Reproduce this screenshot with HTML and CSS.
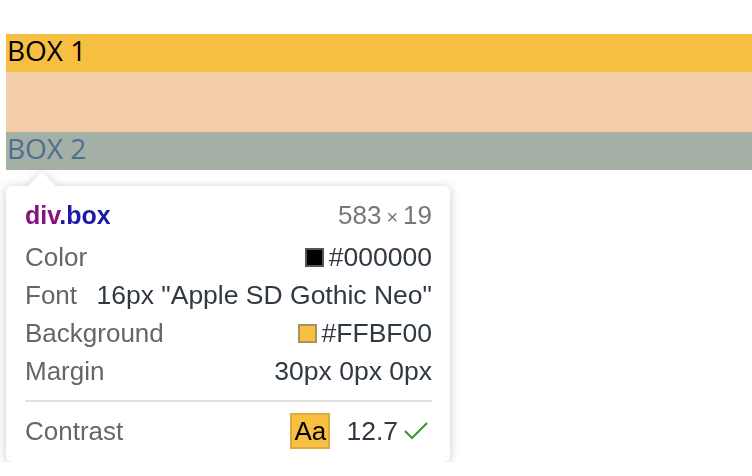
FILE: index.html
```html
<!DOCTYPE html>
<html>
<head>
<meta charset="utf-8">
<link rel="stylesheet" href="styles.css">
</head>
<body>
<div class="page">
  <div class="box box1">BOX 1</div>
  <div class="margin-area"></div>
  <div class="box box2">BOX 2</div>
  <div class="tooltip">
    <div class="tip-head">
      <span class="sel"><span class="tag">div</span><span class="cls">.box</span></span>
      <span class="size">583<span class="times">×</span>19</span>
    </div>
    <div class="row"><span class="label">Color</span><span class="value"><span class="swatch swatch-black"></span>#000000</span></div>
    <div class="row"><span class="label">Font</span><span class="value">16px "Apple SD Gothic Neo"</span></div>
    <div class="row"><span class="label">Background</span><span class="value"><span class="swatch swatch-orange"></span>#FFBF00</span></div>
    <div class="row"><span class="label">Margin</span><span class="value">30px 0px 0px</span></div>
    <div class="sep"></div>
    <div class="row"><span class="label">Contrast</span><span class="value"><span class="aa">Aa</span><span class="ratio">12.7</span><svg class="check" width="28" height="20" viewBox="0 0 28 20"><path d="M1 10 L8 17 L23 2" fill="none" stroke="#3c9a34" stroke-width="2.2"/></svg></span></div>
  </div>
</div>
</body>
</html>
```
FILE: styles.css
```css
html, body { margin: 0; padding: 0; background: #fff; }
.page { padding: 34px 0 0 6px; font-family: "Liberation Sans", Arial, sans-serif; }
.box { height: 38px; font-family: "Open Sans", "Noto Sans", sans-serif; font-size: 28px; line-height: 32px; padding-left: 1px; }
.box1 { background: #f6bf41; color: #000; }
.margin-area { height: 60px; background: #f3cda7; }
.box2 { background: #a4afa6; color: #4f6f92; }
.tooltip { position: relative; width: 444px; box-sizing: border-box; margin-top: 16px; background: #fff; border-radius: 6px; padding: 10px 18px 12px 19px; filter: drop-shadow(0 1px 5px rgba(0,0,0,0.22)); }
.tooltip::before { content: ""; position: absolute; left: 26px; top: -10px; width: 20px; height: 20px; background: #fff; transform: rotate(45deg); }
.tip-head { position: relative; display: flex; justify-content: space-between; align-items: center; height: 38px; margin-bottom: 4px; font-size: 25px; }
.sel { font-weight: bold; }
.tag { color: #881280; }
.cls { color: #1a1aa6; }
.size { color: #777; font-size: 26px; }
.times { font-size: 20px; margin: 0 5px; }
.row { display: flex; justify-content: space-between; align-items: center; height: 38px; font-size: 26px; }
.label { color: #666; }
.value { color: #303942; display: flex; align-items: center; font-size: 26.5px; }
.swatch { width: 15px; height: 15px; border: 2px solid #555; margin-right: 5px; }
.swatch-black { background: #000; }
.swatch-orange { background: #f7c040; border-color: #a79263; }
.sep { height: 2px; background: #e2e2e2; margin: 10px 0 10px; }
.aa { display: inline-flex; align-items: center; justify-content: center; width: 36px; height: 32px; background: #f7c040; border: 2px solid #deaa3c; color: #000; margin-right: 16px; font-size: 26px; }
.ratio { margin-right: 6px; }
.check { display: block; }
```
